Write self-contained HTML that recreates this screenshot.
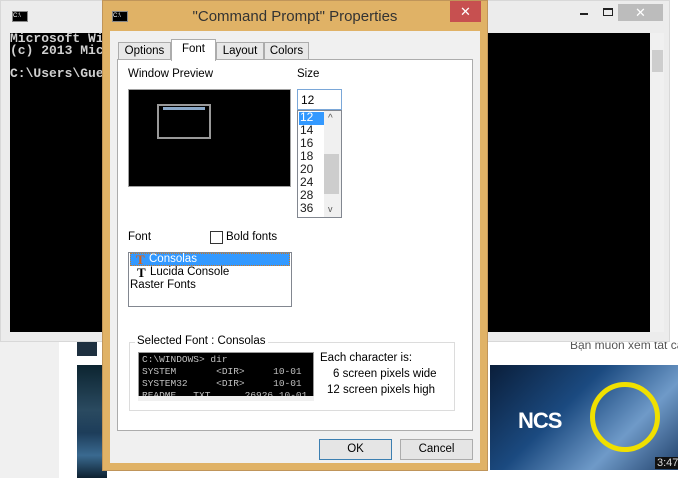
<!DOCTYPE html><html><head><style>
*{margin:0;padding:0;box-sizing:border-box}
body{width:678px;height:478px;overflow:hidden;position:relative;background:#fff;font-family:"Liberation Sans",sans-serif;font-size:11.5px;color:#000}
.a{position:absolute}
.mono{font-family:"Liberation Mono",monospace}
</style></head><body>
<div class="a" style="left:0;top:340px;width:59px;height:138px;background:#f0f0f0"></div>
<div class="a" style="left:77px;top:340px;width:20px;height:16px;background:#1e3040"></div>
<div class="a" style="left:77px;top:365px;width:30px;height:113px;background:linear-gradient(#0c2430,#2a4a60 40%,#1d3d5a 60%,#3a6a90 80%,#0d2030)"></div>
<div class="a" style="left:490px;top:365px;width:188px;height:105px;background:linear-gradient(135deg,#0a1e3a,#1b4a80 40%,#6f9ac8 70%,#20406a)"></div>
<div class="a" style="left:518px;top:408px;color:#fff;font-weight:bold;font-size:22px;letter-spacing:-1px">NCS</div>
<div class="a" style="left:590px;top:382px;width:70px;height:70px;border:5px solid #f0e000;border-radius:50%"></div>
<div class="a" style="left:655px;top:457px;background:#111;color:#ddd;font-size:11px;padding:0 2px">3:47</div>
<div class="a" style="left:570px;top:338px;color:#555;font-size:12px;white-space:nowrap">Bạn muốn xem tất cả</div>
<div class="a" style="left:0;top:0;width:670px;height:342px;background:#ececec;border:1px solid #d8d8d8"></div>
<div class="a" style="left:12px;top:11px;width:16px;height:11px;background:#000;border:1px solid #888"><div style="color:#fff;font-size:6px;line-height:9px">C:\</div></div>
<div class="a" style="left:618px;top:4px;width:45px;height:17px;background:#bcbcbc;color:#fff;text-align:center;font-size:13px;line-height:17px">✕</div>
<div class="a" style="left:580px;top:13px;width:8px;height:2px;background:#222"></div>
<div class="a" style="left:603px;top:8px;width:10px;height:8px;border:1px solid #222;border-top-width:2px"></div>
<div class="a" style="left:10px;top:33px;width:640px;height:299px;background:#000"></div>
<div class="a" style="left:650px;top:33px;width:14px;height:299px;background:#f0f0f0"></div>
<div class="a" style="left:652px;top:50px;width:11px;height:22px;background:#cdcdcd"></div>
<div class="a mono" style="left:10px;top:33px;color:#d0d0d0;font-size:13px;font-weight:bold;line-height:11.5px;white-space:pre">Microsoft Wi
(c) 2013 Mic

C:\Users\Gue</div>
<div class="a" style="left:102px;top:0;width:386px;height:471px;background:#e0b266;border:1px solid #c0955a"></div>
<div class="a" style="left:112px;top:11px;width:16px;height:11px;background:#000;border:1px solid #888"><div style="color:#fff;font-size:6px;line-height:9px">C:\</div></div>
<div class="a" style="left:110px;top:8px;width:370px;text-align:center;font-size:15px;color:#333">"Command Prompt" Properties</div>
<div class="a" style="left:450px;top:1px;width:31px;height:21px;background:#c75050;color:#fff;text-align:center;font-size:13px;line-height:21px">✕</div>
<div class="a" style="left:110px;top:31px;width:370px;height:432px;background:#f0f0f0"></div>
<div class="a" style="left:118px;top:42px;width:53px;height:18px;border:1px solid #acacac;background:#e8e8e8;text-align:center;line-height:16px">Options</div>
<div class="a" style="left:216px;top:42px;width:48px;height:18px;border:1px solid #acacac;background:#e8e8e8;text-align:center;line-height:16px">Layout</div>
<div class="a" style="left:264px;top:42px;width:45px;height:18px;border:1px solid #acacac;background:#e8e8e8;text-align:center;line-height:16px">Colors</div>
<div class="a" style="left:117px;top:59px;width:356px;height:372px;background:#fff;border:1px solid #acacac"></div>
<div class="a" style="left:171px;top:39px;width:45px;height:22px;border:1px solid #acacac;border-bottom:none;background:#fff;text-align:center;line-height:19px">Font</div>
<div class="a" style="left:128px;top:68px">Window Preview</div>
<div class="a" style="left:128px;top:89px;width:163px;height:98px;background:#000;border:1px solid #a0a0a0"></div>
<div class="a" style="left:157px;top:104px;width:54px;height:35px;border:2px solid #999;background:#000"><div style="height:3px;background:#8aa8c8;margin:1px 4px"></div></div>
<div class="a" style="left:297px;top:68px">Size</div>
<div class="a" style="left:297px;top:89px;width:45px;height:21px;border:1px solid #7aa7d8;background:#fff;padding:3px 0 0 3px;font-size:12px">12</div>
<div class="a" style="left:297px;top:110px;width:45px;height:108px;border:1px solid #828790;background:#fff"></div>
<div class="a" style="left:324px;top:111px;width:17px;height:106px;background:#f0f0f0"></div>
<div class="a" style="left:324px;top:154px;width:15px;height:40px;background:#cdcdcd"></div>
<div class="a" style="left:328px;top:113px;font-size:10px;color:#555">^</div>
<div class="a" style="left:328px;top:204px;font-size:9px;color:#555">v</div>
<div class="a" style="left:299px;top:112px;width:25px;height:13px;background:#3399ff"></div>
<div class="a" style="left:300px;top:111px;line-height:13px;font-size:12px;color:#1a1a1a"><span style="color:#fff">12</span><br>14<br>16<br>18<br>20<br>24<br>28<br>36</div>
<div class="a" style="left:128px;top:231px">Font</div>
<div class="a" style="left:210px;top:231px;width:13px;height:13px;border:1px solid #333;background:#fff"></div>
<div class="a" style="left:226px;top:231px">Bold fonts</div>
<div class="a" style="left:128px;top:252px;width:164px;height:55px;border:1px solid #828790;background:#fff"></div>
<div class="a" style="left:130px;top:253px;width:160px;height:13px;background:#3399ff;border:1px dotted #d0781e"></div>
<div class="a" style="left:136px;top:252px;color:#e06010;font-weight:bold;font-family:'Liberation Serif',serif;font-size:13px">T</div>
<div class="a" style="left:149px;top:253px;color:#fff">Consolas</div>
<div class="a" style="left:137px;top:265px;font-weight:bold;font-family:'Liberation Serif',serif;font-size:13px">T</div>
<div class="a" style="left:150px;top:266px">Lucida Console</div>
<div class="a" style="left:130px;top:279px">Raster Fonts</div>
<div class="a" style="left:129px;top:342px;width:326px;height:69px;border:1px solid #dcdcdc"></div>
<div class="a" style="left:135px;top:335px;background:#fff;padding:0 2px">Selected Font : Consolas</div>
<div class="a" style="left:138px;top:352px;width:176px;height:48px;background:#000;border:1px solid #999;overflow:hidden"></div>
<div class="a mono" style="left:142px;top:354px;color:#c0c0c0;font-size:9.5px;line-height:12px;white-space:pre">C:\WINDOWS> dir
SYSTEM       &lt;DIR>     10-01
SYSTEM32     &lt;DIR>     10-01
README   TXT      26926 10-01</div>
<div class="a" style="left:138px;top:396px;width:176px;height:5px;background:#f0f0f0"></div>
<div class="a" style="left:320px;top:352px">Each character is:</div>
<div class="a" style="left:333px;top:368px">6 screen pixels wide</div>
<div class="a" style="left:327px;top:384px">12 screen pixels high</div>
<div class="a" style="left:319px;top:439px;width:73px;height:21px;border:1px solid #3c7fb1;background:#e5e5e5;text-align:center;line-height:19px">OK</div>
<div class="a" style="left:400px;top:439px;width:73px;height:21px;border:1px solid #acacac;background:#e5e5e5;text-align:center;line-height:19px">Cancel</div>
</body></html>
